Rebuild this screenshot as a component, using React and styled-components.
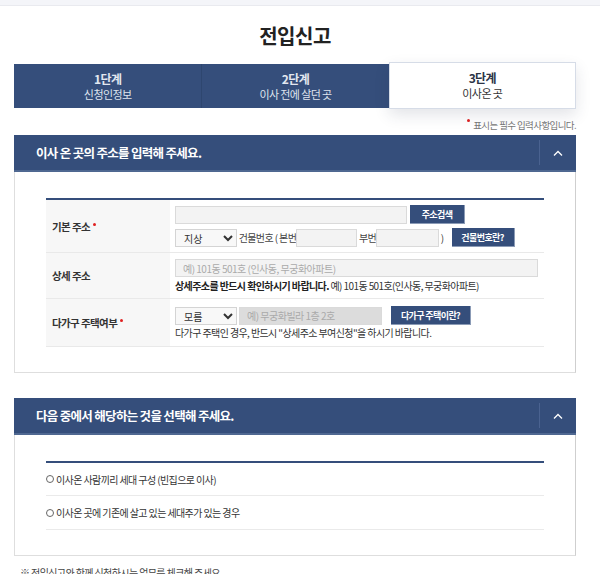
import React from "react";
import styled, { createGlobalStyle } from "styled-components";

const NAVY = "#354e7b";
const FONT = `"Noto Sans CJK KR", "Noto Sans", sans-serif`;

const Global = createGlobalStyle`
  html, body { margin: 0; padding: 0; overflow: hidden; background: #fff; }
  body { font-family: ${FONT}; color: #333; }
  * { box-sizing: border-box; }
`;

const TopStrip = styled.div`
  height: 6px;
  background: #f4f5f9;
  border-bottom: 1px solid #e9eaef;
`;

const Page = styled.div`
  padding: 0 24px 0 14px;
`;

const Title = styled.h1`
  margin: 0;
  padding-top: 13px;
  height: 58px;
  text-align: center;
  font-size: 20px;
  font-weight: 700;
  color: #222;
  letter-spacing: -0.5px;
  line-height: 34px;
`;

const Steps = styled.div`
  display: grid;
  grid-template-columns: repeat(3, 1fr);
  height: 44px;
`;

const Step = styled.div`
  display: flex;
  flex-direction: column;
  align-items: center;
  justify-content: center;
  gap: 1px;
  background: ${(p) => (p.$active ? "#fff" : NAVY)};
  border-left: ${(p) => (p.$first || p.$active ? "none" : "1px solid #2e466f")};
  border: ${(p) => (p.$active ? "1px solid #d6dce7" : undefined)};
  box-shadow: ${(p) => (p.$active ? "0 6px 14px rgba(40,50,80,0.13)" : "none")};
  margin: ${(p) => (p.$active ? "-2px 0 -1px" : "0")};
  position: relative;
  z-index: ${(p) => (p.$active ? 1 : 0)};
  letter-spacing: -0.6px;
`;

const StepNum = styled.div`
  font-size: 12px;
  font-weight: 700;
  line-height: 14px;
  color: ${(p) => (p.$active ? "#2c3446" : "#e2e7f0")};
`;

const StepName = styled.div`
  font-size: 11px;
  line-height: 14px;
  color: ${(p) => (p.$active ? "#333" : "#dfe4ee")};
`;

const Note = styled.div`
  text-align: right;
  font-size: 9.5px;
  line-height: 12px;
  color: #777;
  letter-spacing: -0.6px;
  height: 27px;
  padding-top: 11px;
`;

const Dot = styled.span`
  display: inline-block;
  width: 3px;
  height: 3px;
  border-radius: 50%;
  background: #e02020;
  vertical-align: top;
  margin: ${(p) => p.$m || "0 3px 0 0"};
`;

const Section = styled.section`
  margin-bottom: ${(p) => p.$mb || "0"};
`;

const SectionHead = styled.div`
  display: flex;
  align-items: center;
  height: 37px;
  background: ${NAVY};
  border-bottom: 2px solid #4f6891;
  padding-left: 22px;
`;

const HeadTitle = styled.h2`
  flex: 1;
  margin: 0;
  font-size: 12.5px;
  font-weight: 700;
  color: #fff;
  letter-spacing: -0.7px;
`;

const Toggle = styled.div`
  width: 37px;
  height: 25px;
  border-left: 1px solid #4a6290;
  display: flex;
  align-items: center;
  justify-content: center;
`;

const SectionBody = styled.div`
  border: 1px solid #dedede;
  border-right-color: #cfcfcf;
  border-top: none;
  padding: 26px 31px 25px;
`;

const Table = styled.div`
  border-top: 2px solid ${NAVY};
`;

const Row = styled.div`
  display: grid;
  grid-template-columns: 124px 1fr;
  height: ${(p) => p.$h}px;
  border-bottom: 1px solid #e9e9e9;
`;

const Label = styled.div`
  background: #f7f7f7;
  display: flex;
  align-items: center;
  padding-left: 6px;
  font-size: 10.5px;
  font-weight: 700;
  color: #333;
  letter-spacing: -0.6px;
`;

const Cell = styled.div`
  padding: 0 5px;
  display: flex;
  flex-direction: column;
  gap: ${(p) => p.$gap || 4}px;
  justify-content: center;
`;

const Line = styled.div`
  display: flex;
  align-items: center;
  gap: ${(p) => p.$gap ?? 3}px;
  font-size: 10px;
  line-height: 12px;
  color: #444;
  letter-spacing: -0.6px;
  white-space: nowrap;
`;

const Input = styled.input`
  width: ${(p) => p.$w}px;
  height: 18px;
  margin: ${(p) => p.$m || "0"};
  border: 1px solid #dadada;
  background: ${(p) => (p.disabled ? "#dcdcdc" : "#f3f3f3")};
  font-family: ${FONT};
  font-size: 10px;
  padding: 0 7px;
  letter-spacing: -0.5px;
  outline: none;
  &::placeholder { color: #aaa; }
`;

const Select = styled.select`
  width: 62px;
  height: 18px;
  border: 1px solid #d4d4d4;
  background: #f8f8f8;
  font-family: ${FONT};
  font-size: 10px;
  color: #333;
  padding: 0 4px;
  border-radius: 0;
`;

const Btn = styled.button`
  width: ${(p) => p.$w}px;
  height: 19px;
  margin-left: ${(p) => p.$ml || 0}px;
  background: ${NAVY};
  color: #fff;
  border: none;
  border-right: 1px solid #8b9bb6;
  border-bottom: 1px solid #8b9bb6;
  font-family: ${FONT};
  font-size: 9px;
  font-weight: 700;
  letter-spacing: -0.6px;
  padding: 0;
`;

const Help = styled.div`
  font-size: 10px;
  line-height: 12px;
  color: #333;
  letter-spacing: -0.6px;
  white-space: nowrap;
  b { font-weight: 700; color: #222; }
`;

const RadioRow = styled.label`
  display: flex;
  align-items: center;
  gap: 2px;
  height: ${(p) => p.$h}px;
  padding-top: ${(p) => p.$pt || 0}px;
  border-bottom: 1px solid #eaeaea;
  font-size: 10px;
  color: #333;
  letter-spacing: -0.6px;
`;

const Radio = styled.span`
  width: 8px;
  height: 8px;
  border: 1px solid #666;
  border-radius: 50%;
  display: inline-block;
`;

const Footer = styled.div`
  padding: 9px 0 0 6px;
  font-size: 10px;
  color: #444;
  letter-spacing: -0.6px;
`;

const Chevron = () => (
  <svg width="10" height="6" viewBox="0 0 10 6">
    <polyline points="1,5.5 5,1.5 9,5.5" fill="none" stroke="#fff" strokeWidth="1.3" />
  </svg>
);

export default function App() {
  return (
    <>
      <Global />
      <TopStrip />
      <Page>
        <Title>전입신고</Title>
        <Steps>
          <Step $first>
            <StepNum>1단계</StepNum>
            <StepName>신청인정보</StepName>
          </Step>
          <Step>
            <StepNum>2단계</StepNum>
            <StepName>이사 전에 살던 곳</StepName>
          </Step>
          <Step $active>
            <StepNum $active>3단계</StepNum>
            <StepName $active>이사온 곳</StepName>
          </Step>
        </Steps>
        <Note>
          <Dot />
          표시는 필수 입력사항입니다.
        </Note>

        <Section $mb="25px">
          <SectionHead>
            <HeadTitle>이사 온 곳의 주소를 입력해 주세요.</HeadTitle>
            <Toggle>
              <Chevron />
            </Toggle>
          </SectionHead>
          <SectionBody>
            <Table>
              <Row $h={53}>
                <Label>
                  기본 주소<Dot $m="-4px 0 0 3px" />
                </Label>
                <Cell>
                  <Line>
                    <Input $w={232} />
                    <Btn $w={55}>주소검색</Btn>
                  </Line>
                  <Line $gap={0}>
                    <Select defaultValue="지상">
                      <option>지상</option>
                      <option>지하</option>
                    </Select>
                    <span>&nbsp;건물번호 ( 본번</span>
                    <Input $w={61} />
                    <span>&nbsp;부번</span>
                    <Input $w={63} />
                    <span>&nbsp;)</span>
                    <Btn $w={63} $ml={8}>건물번호란?</Btn>
                  </Line>
                </Cell>
              </Row>
              <Row $h={46}>
                <Label>상세 주소</Label>
                <Cell $gap={3}>
                  <Line>
                    <Input $w={363} placeholder="예) 101동 501호 (인사동, 무궁화아파트)" />
                  </Line>
                  <Help>
                    <b>상세주소를 반드시 확인하시기 바랍니다.</b> 예) 101동 501호(인사동, 무궁화아파트)
                  </Help>
                </Cell>
              </Row>
              <Row $h={48}>
                <Label>
                  다가구 주택여부<Dot $m="-4px 0 0 3px" />
                </Label>
                <Cell $gap={2}>
                  <Line $gap={2}>
                    <Select defaultValue="모름">
                      <option>모름</option>
                      <option>예</option>
                      <option>아니오</option>
                    </Select>
                    <Input $w={143} disabled placeholder="예) 무궁화빌라 1층 2호" />
                    <Btn $w={80} $ml={7}>다가구 주택이란?</Btn>
                  </Line>
                  <Help>다가구 주택인 경우, 반드시 "상세주소 부여신청"을 하시기 바랍니다.</Help>
                </Cell>
              </Row>
            </Table>
          </SectionBody>
        </Section>

        <Section>
          <SectionHead>
            <HeadTitle>다음 중에서 해당하는 것을 선택해 주세요.</HeadTitle>
            <Toggle>
              <Chevron />
            </Toggle>
          </SectionHead>
          <SectionBody>
            <Table>
              <RadioRow $h={33}>
                <Radio />
                이사온 사람끼리 세대 구성 (빈집으로 이사)
              </RadioRow>
              <RadioRow $h={34}>
                <Radio />
                이사온 곳에 기존에 살고 있는 세대주가 있는 경우
              </RadioRow>
            </Table>
          </SectionBody>
        </Section>
        <Footer>※ 전입신고와 함께 신청하시는 업무를 체크해 주세요.</Footer>
      </Page>
    </>
  );
}
